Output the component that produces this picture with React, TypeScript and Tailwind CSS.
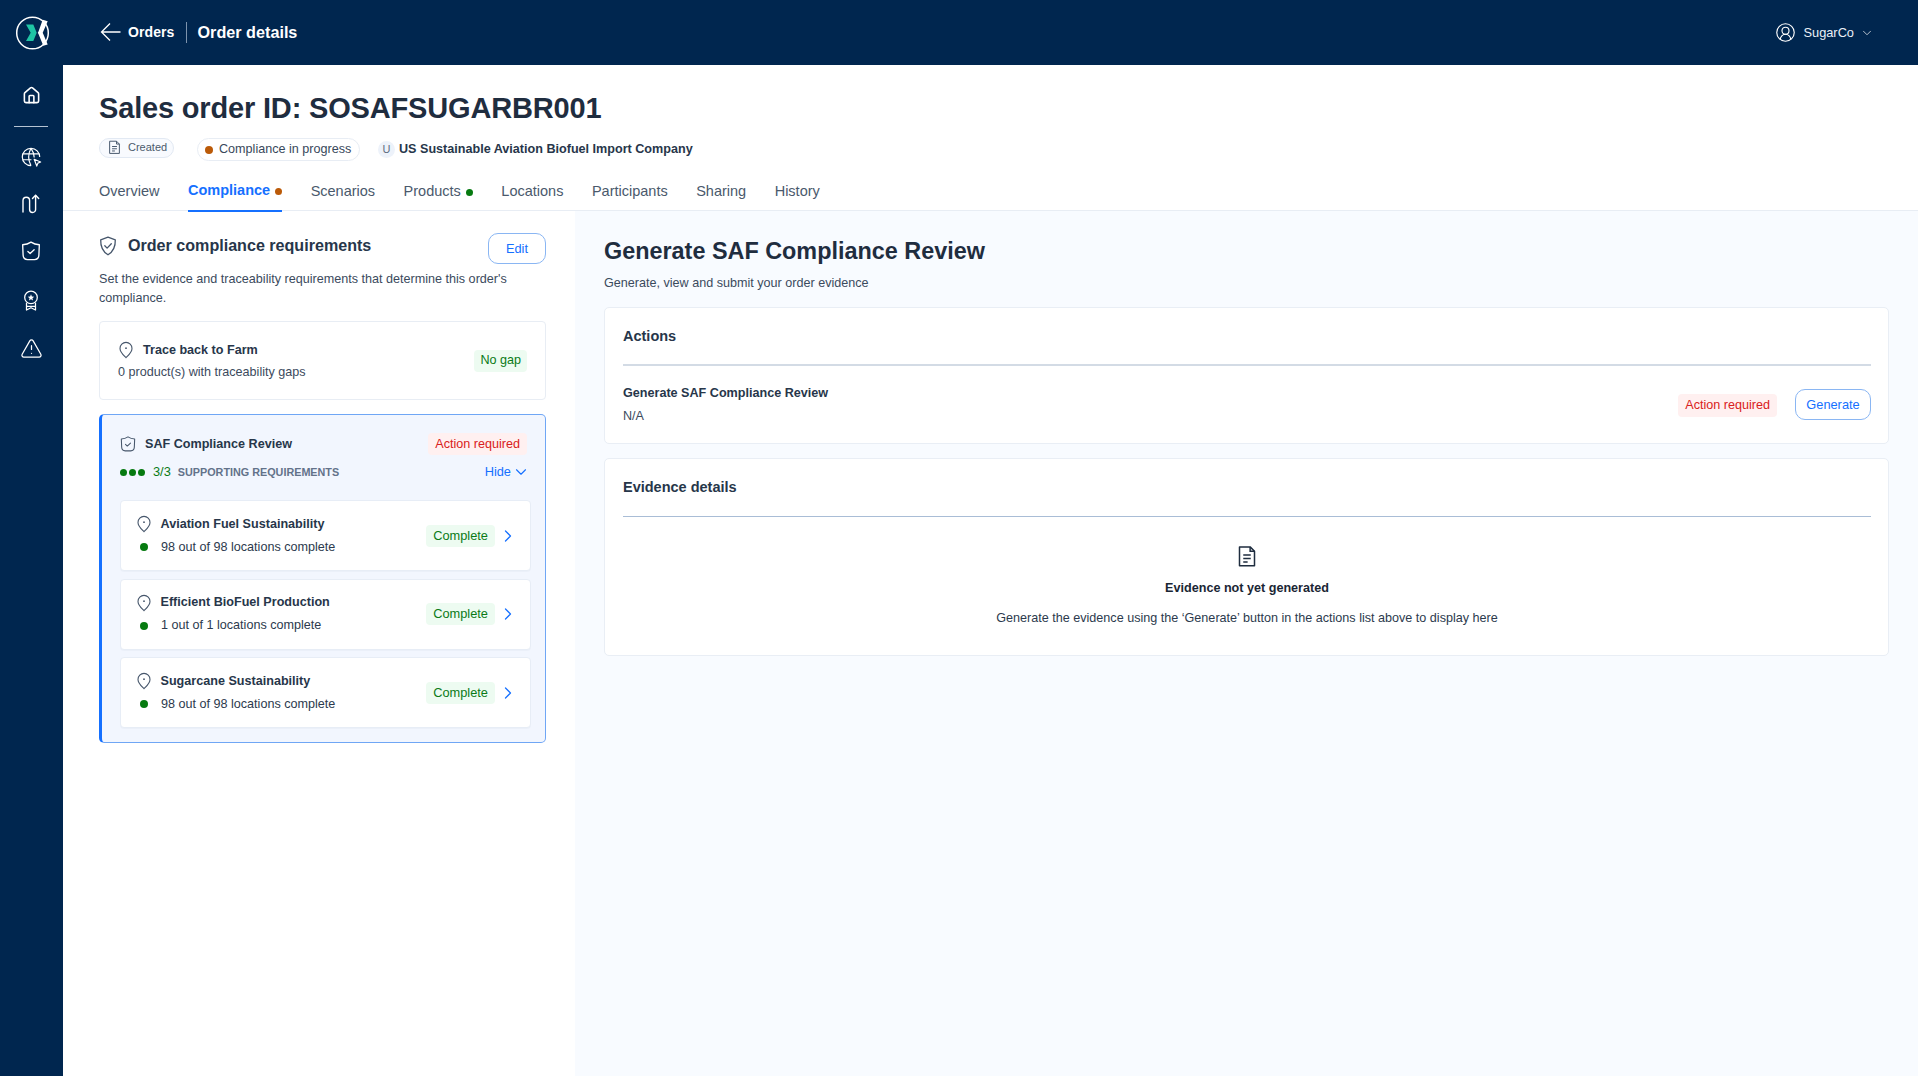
import { ChevronDown, ChevronRight, CircleUserRound, House, TriangleAlert } from "lucide-react";

const PinIcon = () => (
  <svg viewBox="0 0 16 18" width="16" height="18" fill="none" stroke="#46566b" strokeWidth="1.1">
    <path d="M8 16.6C5.2 13.8 2 11.2 2 7.4a6 6 0 0 1 12 0c0 3.8-3.2 6.4-6 9.2Z" />
    <circle cx="8" cy="7.2" r="0.9" fill="#46566b" stroke="none" />
  </svg>
);

const DocIcon = ({ size = 16, color = "#46566b" }: { size?: number; color?: string }) => (
  <svg viewBox="0 0 16 18" width={size} height={(size * 18) / 16} fill="none" stroke={color} strokeWidth="1.2">
    <path d="M2 1.5h8.500L14 5v11.500H2Z" strokeLinejoin="round" />
    <path d="M10.500 1.500V5H14M5 8h6M5 10.800h6M5 13.500h3.500" />
  </svg>
);

const ShieldIcon = ({ size = 18, color = "#46566b" }: { size?: number; color?: string }) => (
  <svg viewBox="0 0 18 20" width={size} height={(size * 20) / 18} fill="none" stroke={color} strokeWidth="1.3" strokeLinejoin="round" strokeLinecap="round">
    <path d="M9 1.2 16.3 3.8c.2 5.6-.5 11-7.3 15-6.800-4-7.500-9.400-7.300-15Z" />
    <path d="m5.800 9.800 2.300 2.300 4.200-4.300" />
  </svg>
);

const WideShield = ({ size = 18, color = "#46566b" }: { size?: number; color?: string }) => (
  <svg viewBox="0 0 18 18" width={size} height={size} fill="none" stroke={color} strokeWidth="1.2" strokeLinejoin="round" strokeLinecap="round">
    <path d="M1.500 3.400C4 3.200 6.800 2.400 9 1c2.200 1.400 5 2.200 7.500 2.400l-.4 9.300c-.1 2.400-1.600 4-4 4H5.900c-2.400 0-3.900-1.600-4-4Z" />
    <path d="m6.200 9.400 2 1.900 3.600-3.400" />
  </svg>
);

const Logo = () => (
  <svg viewBox="0 0 36 36" width="36" height="36">
    <circle cx="17.500" cy="18" r="15.800" fill="none" stroke="white" strokeWidth="1.500" />
    <path d="M11 9.500h7.300l3.400 8.300-3.400 8.200H11l4.700-8.200Z" fill="#1fc4a5" />
    <path d="M27.700 4.800 32.700 6.200 27.700 17.800 32.700 29.500 28.300 30.800 23.500 19 22.800 17.800 23.500 16.500Z" fill="white" />
  </svg>
);

const GlobeIcon = () => (
  <svg viewBox="0 0 24 24" width="22" height="22" fill="none" stroke="white" strokeWidth="1.300" strokeLinejoin="round">
    <path d="M12 21.500a9.500 9.500 0 1 1 9.500-9.500" />
    <path d="M3 8.500h18M3 15h9.500M12 2.500C8.500 9 8.500 15 12 21.500M12 2.500c2.500 3.500 3.500 7 3.500 10" />
    <path d="m15.500 14.500 7 3-3 1.200-1.200 3.200Z" />
  </svg>
);

const RouteIcon = () => (
  <svg viewBox="0 0 24 24" width="24" height="24" fill="none" stroke="white" strokeWidth="1.400" strokeLinecap="round" strokeLinejoin="round">
    <path d="M4 20V8.500a3.300 3.300 0 0 1 6.600 0v9a3 3 0 0 0 6 0V3.500" />
    <path d="m13.500 6.500 3.100-3.200 3.100 3.200" />
  </svg>
);

const AwardIcon = () => (
  <svg viewBox="0 0 20 24" width="18" height="22" fill="none" stroke="white" strokeWidth="1.400" strokeLinejoin="round">
    <circle cx="10" cy="8" r="7" />
    <path d="M10 4.500 11 7l2.600.2-2 1.700.7 2.600L10 10l-2.300 1.500.7-2.600-2-1.700L9 7Z" fill="white" stroke="none" />
    <path d="M5 14v8l5-2.500 5 2.500v-8M5 18h10" />
  </svg>
);

const BackArrow = () => (
  <svg viewBox="0 0 21 20" width="21" height="20" fill="none" stroke="white" strokeWidth="1.300">
    <path d="M20.500 10H1.500M10 1.500 1.500 10l8.500 8.500" />
  </svg>
);

const Complete = () => (
  <span className="rounded-[4px] bg-[#edfbf1] px-[7px] h-[22px] flex items-center text-[12.800px] text-[#0a7a16]">Complete</span>
);

const Requirement = ({ title, sub }: { title: string; sub: string }) => (
  <div className="h-[71px] rounded-[4px] border border-[#e7edf6] bg-white flex items-center pl-[15px] pr-[12px] shadow-[0_1px_1px_rgba(20,50,90,0.03)]">
    <div className="flex-1">
      <div className="flex items-center gap-[8.500px] h-[22px]">
        <PinIcon />
        <span className="text-[12.600px] font-bold text-[#27364a]">{title}</span>
      </div>
      <div className="flex items-center mt-[1px] h-[22px]">
        <span className="w-[8px] h-[8px] rounded-full bg-[#067a10] ml-[4px] mr-[13px]" />
        <span className="text-[12.600px] text-[#2c3a4d]">{sub}</span>
      </div>
    </div>
    <Complete />
    <ChevronRight size={20} strokeWidth={1.500} className="text-[#1570ff] ml-[3px]" />
  </div>
);

const tabs = ["Overview", "Compliance", "Scenarios", "Products", "Locations", "Participants", "Sharing", "History"];

export default function App() {
  return (
    <div className="h-[1076px] w-[1918px] overflow-hidden bg-white font-['Liberation_Sans',Arial,sans-serif] text-[#27364a]">
      <header className="h-[65px] bg-[#00264f] text-white flex items-center">
        <div className="w-[63px] flex justify-center pl-[2px]"><Logo /></div>
        <div className="flex items-center ml-[37px]">
          <BackArrow />
          <span className="text-[14px] font-bold ml-[7px] tracking-[0.1px]">Orders</span>
          <span className="w-px h-[21px] bg-[#7d93ad] mx-[11px]" />
          <span className="text-[16.200px] font-bold">Order details</span>
        </div>
        <div className="ml-auto flex items-center pr-[44px]">
          <CircleUserRound size={21} strokeWidth={1.300} />
          <span className="text-[12.800px] ml-[7px] text-[#eaf0f7]">SugarCo</span>
          <ChevronDown size={14} strokeWidth={1.200} className="ml-[6px]" />
        </div>
      </header>

      <div className="flex h-[1011px]">
        <aside className="w-[63px] bg-[#00264f] flex flex-col items-center pr-[1px] text-white">
          <div className="h-[61px] w-full flex items-center justify-center"><House size={19} strokeWidth={2} /></div>
          <div className="w-[34px] h-px bg-[#b5c3d3]" />
          <div className="h-[60px] w-full flex items-center justify-center"><GlobeIcon /></div>
          <div className="h-[34px] w-full flex items-center justify-center"><RouteIcon /></div>
          <div className="h-[60px] w-full flex items-center justify-center"><WideShield size={20} color="white" /></div>
          <div className="h-[40px] w-full flex items-center justify-center"><AwardIcon /></div>
          <div className="h-[54px] w-full flex items-center justify-center"><TriangleAlert size={23} strokeWidth={1.300} /></div>
        </aside>

        <main className="flex-1 flex flex-col">
          <section className="h-[146px] border-b border-[#e8edf4] px-[36px] pt-[25px]">
            <h1 className="text-[29px] leading-[36px] font-bold text-[#1f2d3f] tracking-[-0.17px]">Sales order ID: SOSAFSUGARBR001</h1>
            <div className="flex items-center mt-[12px] h-[23px]">
              <span className="h-[20px] w-[75px] rounded-full border border-[#e2e9f3] bg-[#f8fafe] flex items-center pl-[8px] -mt-[4px] text-[11px] text-[#4b5a6c]">
                <DocIcon size={13} /><span className="ml-[7px]">Created</span>
              </span>
              <span className="h-[23px] w-[163px] ml-[23px] rounded-full border border-[#e8edf4] flex items-center pl-[7px] text-[12.600px] text-[#39485b]">
                <span className="w-[8px] h-[8px] rounded-full bg-[#bb5a08]" /><span className="ml-[6px]">Compliance in progress</span>
              </span>
              <span className="w-[17px] h-[17px] ml-[18px] rounded-full bg-[#edf2fa] flex items-center justify-center text-[11px] text-[#5d6c80]">U</span>
              <span className="ml-[4px] text-[12.600px] font-bold text-[#27364a]">US Sustainable Aviation Biofuel Import Company</span>
            </div>
            <nav className="flex gap-[28.500px] mt-[15px] h-[37px]">
              {tabs.map((t) => (
                <div key={t} className={t === "Compliance" ? "flex items-center h-[36px] pb-[4px] border-b-2 border-[#1570ff] text-[#1570ff] font-bold text-[14.500px]" : "flex items-center h-[36px] pb-[4px] text-[14.500px] text-[#4a596c]"}>
                  {t}
                  {t === "Compliance" && <span className="w-[7px] h-[7px] ml-[5px] rounded-full bg-[#bb5a08]" />}
                  {t === "Products" && <span className="w-[7px] h-[7px] ml-[5px] rounded-full bg-[#067a10]" />}
                </div>
              ))}
            </nav>
          </section>

          <div className="flex-1 flex">
            <section className="w-[512px] pl-[36px] pr-[29px] pt-[22px]">
              <div className="flex items-start justify-between h-[32px]">
                <div className="flex items-center gap-[11px] h-[25px]">
                  <ShieldIcon size={18} />
                  <span className="text-[16.100px] font-bold text-[#27364a]">Order compliance requirements</span>
                </div>
                <button className="w-[58px] h-[31px] rounded-[10px] border border-[#8ab6f3] text-[12.800px] text-[#1570ff] bg-white">Edit</button>
              </div>
              <p className="mt-[5px] text-[12.600px] leading-[19px] text-[#3b4a5d]">Set the evidence and traceability requirements that determine this order's compliance.</p>

              <div className="mt-[13px] h-[79px] rounded-[4px] border border-[#e8edf4] flex items-center pl-[18px] pr-[18px]">
                <div className="flex-1">
                  <div className="flex items-center gap-[9px] h-[22px]">
                    <PinIcon />
                    <span className="text-[12.600px] font-bold text-[#27364a]">Trace back to Farm</span>
                  </div>
                  <div className="text-[12.600px] text-[#3b4a5d] mt-[2px]">0 product(s) with traceability gaps</div>
                </div>
                <span className="rounded-[4px] bg-[#edfbf1] px-[6px] h-[22px] flex items-center text-[12.600px] text-[#0a7a16]">No gap</span>
              </div>

              <div className="mt-[14px] h-[329px] rounded-[5px] border border-[#6fa6f5] border-l-[3px] border-l-[#1570ff] bg-[#f2f6fe] pl-[18px] pr-[14px] pt-[16px]">
                <div className="flex items-center h-[26px]">
                  <WideShield size={16} />
                  <span className="ml-[9px] text-[12.600px] font-bold text-[#27364a]">SAF Compliance Review</span>
                  <span className="ml-auto mr-[4px] h-[22px] rounded-[4px] bg-[#fff0f0] px-[7px] flex items-center text-[12.600px] text-[#d92020]">Action required</span>
                </div>
                <div className="flex items-center mt-[4px] h-[22px]">
                  <span className="w-[7px] h-[7px] rounded-full bg-[#067a10]" />
                  <span className="w-[7px] h-[7px] rounded-full bg-[#067a10] ml-[2px]" />
                  <span className="w-[7px] h-[7px] rounded-full bg-[#067a10] ml-[2px]" />
                  <span className="ml-[8px] text-[12.800px] text-[#0a7a16]">3/3</span>
                  <span className="ml-[7px] text-[10.800px] font-bold text-[#63728a]">SUPPORTING REQUIREMENTS</span>
                  <span className="ml-auto text-[12.800px] text-[#1570ff]">Hide</span>
                  <ChevronDown size={18} strokeWidth={1.500} className="text-[#1570ff] ml-[1px] mr-[1px]" />
                </div>
                <div className="flex flex-col gap-[7.500px] mt-[17px]">
                  <Requirement title="Aviation Fuel Sustainability" sub="98 out of 98 locations complete" />
                  <Requirement title="Efficient BioFuel Production" sub="1 out of 1 locations complete" />
                  <Requirement title="Sugarcane Sustainability" sub="98 out of 98 locations complete" />
                </div>
              </div>
            </section>

            <section className="flex-1 bg-[#f8fbff] pl-[29px] pr-[29px] pt-[24px]">
              <h2 className="text-[23.400px] leading-[32px] font-bold text-[#1f2d3f]">Generate SAF Compliance Review</h2>
              <p className="mt-[6px] text-[12.600px] leading-[20px] text-[#3b4a5d]">Generate, view and submit your order evidence</p>
              <div className="mt-[14px] h-[137px] rounded-[5px] border border-[#e9eef5] bg-white pl-[18px] pr-[17px]">
                <div className="h-[58px] pt-[2px] border-b-2 border-[#d3dbe5] flex items-center">
                  <span className="text-[14.500px] font-bold text-[#27364a]">Actions</span>
                </div>
                <div className="flex items-center h-[76px]">
                  <div>
                    <div className="text-[12.600px] font-bold leading-[22px] text-[#27364a]">Generate SAF Compliance Review</div>
                    <div className="text-[12.600px] leading-[22px] mt-[1px] text-[#3b4a5d]">N/A</div>
                  </div>
                  <span className="ml-auto mt-[2px] h-[23px] rounded-[4px] bg-[#fff0f0] px-[7px] flex items-center text-[12.600px] text-[#d92020]">Action required</span>
                  <button className="ml-[18px] mt-[1px] w-[76px] h-[31px] rounded-[10px] border border-[#8ab6f3] text-[12.800px] text-[#1570ff] bg-white">Generate</button>
                </div>
              </div>
              <div className="mt-[14px] h-[198px] rounded-[5px] border border-[#e9eef5] bg-white pl-[18px] pr-[17px]">
                <div className="h-[58px] border-b border-[#a9bdd6] flex items-center">
                  <span className="text-[14.500px] font-bold text-[#27364a]">Evidence details</span>
                </div>
                <div className="flex flex-col items-center pt-[28px]">
                  <DocIcon size={20} color="#1f2d3f" />
                  <div className="mt-[10.500px] text-[12.600px] font-bold leading-[20px] text-[#1a2634]">Evidence not yet generated</div>
                  <div className="mt-[10px] text-[12.600px] leading-[20px] text-[#2c3a4d]">Generate the evidence using the ‘Generate’ button in the actions list above to display here</div>
                </div>
              </div>
            </section>
          </div>
        </main>
      </div>
    </div>
  );
}
